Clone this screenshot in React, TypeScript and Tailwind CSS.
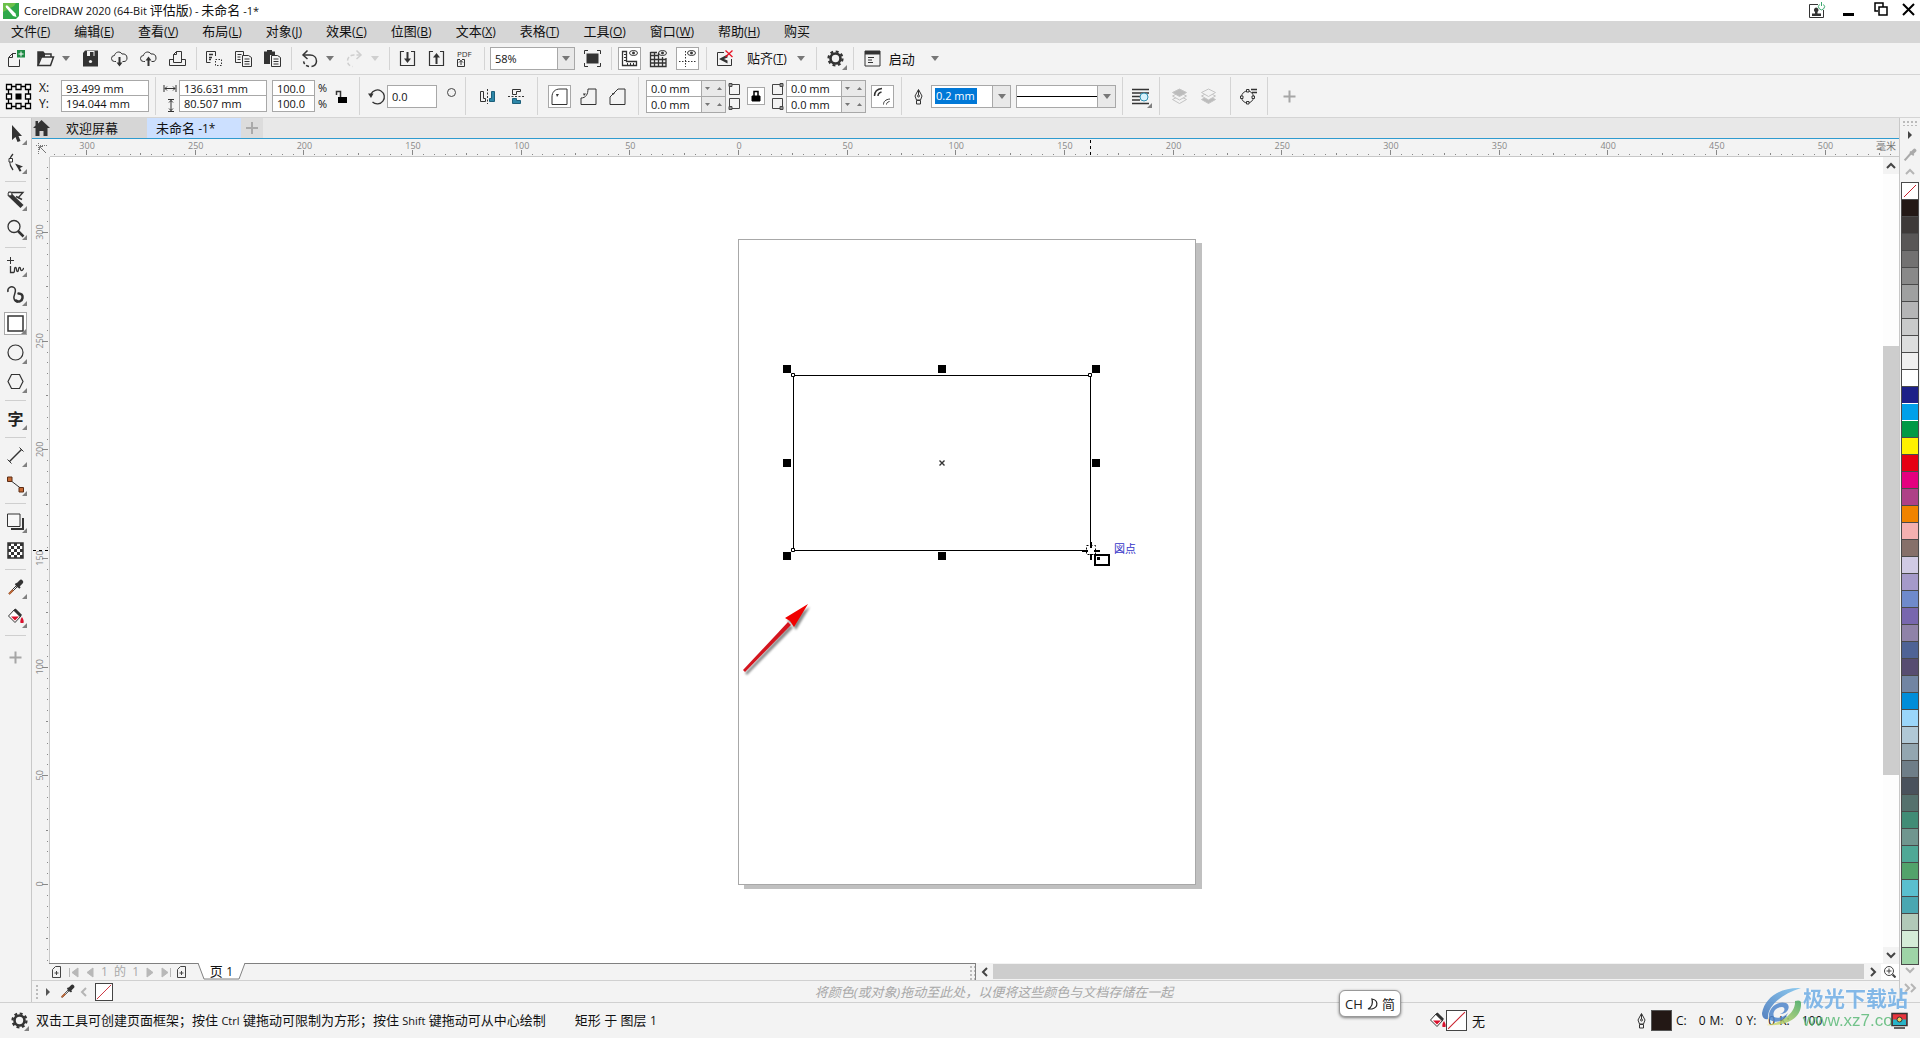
import type { ReactNode } from 'react';

const menus: [string, string][] = [
    ['文件', 'F'],
    ['编辑', 'E'],
    ['查看', 'V'],
    ['布局', 'L'],
    ['对象', 'J'],
    ['效果', 'C'],
    ['位图', 'B'],
    ['文本', 'X'],
    ['表格', 'T'],
    ['工具', 'O'],
    ['窗口', 'W'],
    ['帮助', 'H'],
    ['购买', ''],
];

const swatches = [
    '#231815', '#3e3a39', '#595757', '#727171', '#898989', '#9fa0a0', '#b5b5b6', '#c9caca', '#dcdddd', '#efefef', '#ffffff',
    '#1d2088', '#00a0e9', '#009944', '#fff100', '#e60012', '#e4007f', '#ae4087', '#f08300', '#f4b0b0', '#86706a', '#d0cae4',
    '#a59aca', '#6f8acb', '#7867ae', '#8f82a8', '#4f6395', '#574d71', '#7185a3', '#008dd9', '#9ad6fa', '#b0c8d6', '#93a6b0',
    '#6f7e88', '#4a525c', '#55716d', '#418c76', '#70968f', '#4fa896', '#52a36b', '#5abfce', '#4aa7b1', '#b1c9b8', '#d5ebd7',
    '#9ed4a7',
];

// pixels per millimetre at 58% zoom
const SCALE = 2.173;

/* ---------- icons ---------- */

function Svg({ children, size = 17 }: { children: ReactNode; size?: number }) {
    return (
        <svg width={size} height={size} viewBox={`0 0 ${size} ${size}`} fill="none" stroke="#333" aria-hidden="true" className="shrink-0 overflow-visible">
            {children}
        </svg>
    );
}

const bucket = (
    <>
        <path d="M7.5 1.5 14 8l-6 6.5L1.5 8z" fill="#fff" />
        <path d="M7.5 1.5 14 8" strokeWidth="3" />
        <path d="M4 8.5h8L8 12.5z" fill="#d9102c" stroke="none" />
        <path d="M15 9c1.500 2.500 2 4 1.500 6h-3c-.5-2 0-4 1.500-6z" fill="#d9102c" stroke="none" />
    </>
);

const dropper = (
    <>
        <path d="M10 6 2.5 13.5l-.5 1.5 1.5-.5L11 7" />
        <path d="m2 15 4-4" stroke="#c06a3a" strokeWidth="2" />
        <path d="m8.5 4.5 4.5 4.5" strokeWidth="2" />
        <path d="m11 6 3-3" strokeWidth="4.5" strokeLinecap="round" />
    </>
);

const gear = (
    <>
        <circle cx="8.5" cy="8.5" r="5" strokeWidth="2.6" />
        <circle cx="8.5" cy="8.5" r="7" strokeWidth="2.2" strokeDasharray="2.9 2.6" />
    </>
);

const nib = (
    <>
        <path d="M8.5 1.5 5 8l1.5 4h4L12 8z" />
        <path d="M8.5 2v5M6.5 12.5h4v3.5h-4z" />
        <circle cx="8.5" cy="8" r="1" />
    </>
);

const icons: Record<string, ReactNode> = {
    new: (
        <>
            <path d="M4.5 3.5.5 7.5v9h11v-7M4.5 3.5H8M1 7.5h3.500v-4" />
            <path d="M9 0h8v7.5H9z" fill="#1e8a44" stroke="none" />
            <path d="M13 1.5v5M10.5 4h5" stroke="#fff" />
        </>
    ),
    open: (
        <>
            <path d="M1 15.5V2h5l1.5 2H14v3" strokeWidth="1.5" />
            <path d="M1 2h5l2 2v3H4L1 15z" fill="#333" stroke="none" />
            <path d="M4.500 7h12L13.5 15.5H1z" strokeWidth="1.5" />
        </>
    ),
    save: (
        <>
            <path d="M3 .5h13v16H1V3z" fill="#333" stroke="none" />
            <path d="M5 1h7.5v5H5z" fill="#f3f3f3" stroke="none" />
            <path d="M8 2h3.5v4H8z" fill="#333" stroke="none" />
            <circle cx="8.5" cy="11.5" r="1.6" fill="#f3f3f3" stroke="none" />
        </>
    ),
    cloudDown: (
        <>
            <path d="M5 11.5H3.5a3 3 0 0 1 0-6C4 2 9 .5 11 4c3-.5 5 1 5 4 0 2-1 3.5-3 3.5h-1.5" />
            <path d="M8.5 7v8" strokeWidth="2" />
            <path d="M5.5 12.5 8.5 16.500l3-4z" fill="#333" stroke="none" />
        </>
    ),
    cloudUp: (
        <>
            <path d="M5 11.5H3.5a3 3 0 0 1 0-6C4 2 9 .5 11 4c3-.5 5 1 5 4 0 2-1 3.5-3 3.5h-1.5" />
            <path d="M8.5 9v7" strokeWidth="2" />
            <path d="M5.5 10.5 8.5 6.500l3 4z" fill="#333" stroke="none" />
        </>
    ),
    print: (
        <>
            <path d="M4.5 9.5H.5v6h16v-6h-4" />
            <path d="M4.5 12.5v-8l3-3h5v11zM4.5 4.5h3v-3" />
        </>
    ),
    cut: (
        <>
            <path d="M9.5 6V1.500h-9v11h4" />
            <path d="M3 4.5h4M3 7.5h3M3 9.5h2" strokeWidth="1.5" />
            <path d="M9.5 9.5h6v6h-6z" strokeDasharray="1.5 1.5" />
        </>
    ),
    copy: (
        <>
            <path d="M6 12.5H.5v-11h8V5M2.5 4.5h4M2.5 7h3M2.5 9.5h3" />
            <path d="M7.5 5.5h6l3 2v9h-9zM9.5 9h5M9.5 11.5h5M9.5 14h5" />
        </>
    ),
    paste: (
        <>
            <path d="M0 1.5h3V0h5v1.5h3V5H6v9H0z" fill="#333" stroke="none" />
            <path d="M7.5 5.5h6l3 2v9h-9zM9.5 9h5M9.5 11.5h5M9.5 14h5" />
        </>
    ),
    undo: (
        <>
            <path d="M2.5 5H9c4 0 6.5 2.500 6.500 6 0 3-2 5-5 5.500" strokeWidth="1.5" />
            <path d="M8 16.500C4.500 16 2.500 13.500 2.500 10" strokeWidth="1.500" strokeDasharray="3 2" />
            <path d="M6.5.5 2 5l4.5 4" strokeWidth="1.5" />
        </>
    ),
    redo: (
        <g stroke="#cfcfcf">
            <path d="M14.5 5H8c-4 0-6.500 2.500-6.500 6 0 3 2 5 5 5.500" strokeWidth="1.5" strokeDasharray="4 2" />
            <path d="M10.5.5 15 5l-4.5 4" strokeWidth="1.5" />
        </g>
    ),
    import: (
        <>
            <path d="M5 1.5H1.5v14h14v-14H12" strokeWidth="1.2" />
            <path d="M8.5 2v8" strokeWidth="2" />
            <path d="M5 8.5 8.5 13 12 8.5z" fill="#333" stroke="none" />
        </>
    ),
    export: (
        <>
            <path d="M5 1.5H1.5v14h14v-14H12" strokeWidth="1.2" />
            <path d="M8.5 6v8" strokeWidth="2" />
            <path d="M5 7.5 8.5 3 12 7.5z" fill="#333" stroke="none" />
        </>
    ),
    pdf: (
        <>
            <text x="0" y="7" fontSize="8" fill="#333" stroke="none">
                PDF
            </text>
            <path d="M3 9.5H.5v7h7v-7H5M4 15v-5M2 12.500l2-2 2 2" />
        </>
    ),
    fullscreen: (
        <>
            <path d="M.5 4V.5H4M13 .5h3.5V4M16.5 13v3.5H13M4 16.5H.5V13" />
            <path d="M2.5 3.5h12v10h-12z" fill="#333" stroke="none" />
        </>
    ),
    rulers: (
        <>
            <path d="M1.5 1.5h4v10h10v4h-14z" strokeWidth="1.3" />
            <path d="M3 4.5h2M3 7.5h2M3 10.5h2M6.5 13v2M9.5 13v2M12.5 13v2" />
            <ellipse cx="12.5" cy="3" rx="4" ry="2.5" />
            <circle cx="12.5" cy="3" r="1" fill="#333" />
        </>
    ),
    grid: (
        <>
            <path d="M.5 2v14.5h15.500V8M4.5 2v14M8.5 3v13M12.5 7v9M1 5.5h8M1 9.5h15M1 13h15M.5 2.5H7" strokeWidth="1.3" />
            <ellipse cx="12.5" cy="3" rx="4" ry="2.5" />
            <circle cx="12.5" cy="3" r="1" fill="#333" />
        </>
    ),
    guides: (
        <>
            <path d="M6.5 1v16M0 11.5h17" strokeDasharray="1.5 1.5" />
            <ellipse cx="12.5" cy="3" rx="4" ry="2.5" />
            <circle cx="12.5" cy="3" r="1" fill="#333" />
        </>
    ),
    snapOff: (
        <>
            <path d="M8 2.5H1.5v13h14V9" />
            <path d="M11.5 4.5 3 9l8.5 4.5v-3L8 9l3.5-1.5z" fill="#333" stroke="none" />
            <path d="m9.5.5 7 6.5m0-6.5L9.500 7" stroke="#e81123" strokeWidth="1.3" />
        </>
    ),
    gear,
    launch: (
        <>
            <path d="M1 1h15v15H1zM4 7.5h6M4 10h4M4 12.5h5" />
            <path d="M1 1h15v3.5H1z" fill="#333" stroke="none" />
        </>
    ),
    mirrorH: (
        <>
            <path d="M1.5 3.5v10h5v-3h-2v-7z" />
            <path d="M15.5 3.5v10h-5v-3h2v-7z" fill="#2d87a8" stroke="#1d5f7a" />
            <path d="M8.5 1v15" strokeDasharray="2 1.5" />
        </>
    ),
    mirrorV: (
        <>
            <path d="M4.5 6.5v-5h8v2h-4v3z" />
            <path d="M4.5 10.5v5h8v-3h-4v-2z" fill="#2d87a8" stroke="#1d5f7a" />
            <path d="M0 8.5h17" strokeDasharray="2 1.5" />
        </>
    ),
    round: (
        <>
            <path d="M1 16.5V9C1 4 4 1 9 1h7v15.500z" />
            <path d="M5 6h3L6 9z" fill="#333" stroke="none" />
        </>
    ),
    scallop: (
        <>
            <path d="M1 16.5V10c5 0 7-4 7-9h8v15.500z" />
            <path d="M3 5.5h3L4 8z" fill="#333" stroke="none" />
        </>
    ),
    chamfer: (
        <>
            <path d="M1 16.5V9l8-8h7v15.500z" />
            <path d="M3 5h3L4 7z" fill="#333" stroke="none" />
        </>
    ),
    relative: (
        <>
            <path d="M.5 8C.5 4 3 1 8 .5" strokeWidth="1.5" />
            <path d="M4 8c0-2 1.500-3.500 3.500-4" strokeWidth="1.5" />
            <path d="M9.500 16.500c0-3 2-5 6.500-5.500M12.500 16.500c0-1.500 1-2.500 3-3" />
        </>
    ),
    nib,
    wrap: (
        <>
            <path d="M0 1.5h17M0 5h17M0 8.5h8M0 12h8M0 15.5h17" strokeWidth="1.3" />
            <circle cx="12" cy="9" r="4" fill="#d8f2fc" stroke="#2f8fb0" />
        </>
    ),
    toFront: (
        <g stroke="#c4c4c4">
            <path d="m8.5 8 7 3.500-7 4-7-4z" />
            <path d="m8.5 4.5 7 3.500-7 4-7-4z" fill="#f3f3f3" />
            <path d="m8.5 1 7 3.500-7 4-7-4z" fill="#bcbcbc" />
        </g>
    ),
    toBack: (
        <g stroke="#c4c4c4">
            <path d="m8.5 8 7 3.500-7 4-7-4z" fill="#bcbcbc" />
            <path d="m8.5 4.5 7 3.500-7 4-7-4z" fill="#f3f3f3" />
            <path d="m8.5 1 7 3.500-7 4-7-4z" fill="#f3f3f3" />
        </g>
    ),
    toCurves: (
        <>
            <circle cx="7.5" cy="9" r="6" />
            <path d="M6.500 1.500h2.500v2.500H6.500zM.5 8h2.500v2.500H.5zM6.500 13.500h2.500v2.500H6.500zM12 8h2.500v2.500H12z" fill="#f3f3f3" />
            <path d="M11 1.5h6M12 4.5h5" strokeWidth="1.5" />
        </>
    ),
    plus: <path d="M8.500 2.500v12M2.500 8.500h12" stroke="#a6a6a6" strokeWidth="2" />,
    pick: <path d="M5 0v15l3.500-3 2 5 3-1-2-5H15z" fill="#333" stroke="none" />,
    shape: (
        <>
            <path d="M6 0C2 4 1.5 10 6 16" strokeWidth="1.3" />
            <path d="M2 4.5h3.500V8H2z" fill="#fff" />
            <path d="m8 9.5 8 3-3 1.500 1.500 3-2 .5-1.500-3z" fill="#333" stroke="none" />
        </>
    ),
    crop: (
        <>
            <path d="m2 3 13 12.5" strokeWidth="4.5" />
            <path d="M1 1.5h15L11 7" strokeWidth="1.3" />
            <circle cx="3" cy="3" r="2" fill="#f3f3f3" />
            <path d="m9 5.5 6 3" strokeWidth="1.5" />
        </>
    ),
    zoom: (
        <>
            <circle cx="7" cy="6.5" r="6" strokeWidth="1.3" />
            <path d="m11 11 5.500 5.500" strokeWidth="2.5" />
        </>
    ),
    freehand: (
        <>
            <path d="M3.5 0v7M0 3.5h7" />
            <path d="M3.500 9v6.500h3c2 0 0-5 2-5s0 4 2 4 0-4 2-4 0 3 2 3 1-2 2.500-2" strokeWidth="1.3" />
        </>
    ),
    artistic: (
        <>
            <path d="M1 6C0 2 4-.500 7 1.500c4 3-1 7 0 11 .5 2 2 3.500 4 3.500" strokeWidth="1.5" />
            <path d="M9 14.500c2 2 6 1 6.500-2.500.5-3-1-4.500-4-4.500" strokeWidth="2.500" strokeLinecap="round" />
        </>
    ),
    rect: <path d="M1 1h15v15H1z" strokeWidth="1.5" />,
    ellipse: <circle cx="8.5" cy="8.5" r="7.5" strokeWidth="1.2" />,
    polygon: <path d="M4.500 1.500h8l3.500 7-3.500 7h-8L1 8.500z" strokeWidth="1.2" />,
    dimension: (
        <>
            <path d="M2.500 14.500 14.500 2.500" strokeWidth="1.5" />
            <path d="m.500 12.500 4 4M12.500.500l4 4" />
        </>
    ),
    connector: (
        <>
            <path d="m3 4 11 8.5" />
            <path d="M.5 1h4.500v4.500H.5zM12 11.500h4.500V16H12z" fill="#c66a35" stroke="#5a2c14" />
        </>
    ),
    shadow: (
        <>
            <path d="M4 16h12V5" strokeWidth="2" />
            <path d="M.5 1h12.500v12.500H.5z" fill="#f8f8f8" />
        </>
    ),
    transparency: (
        <>
            <path d="M1 1h15v15H1z" fill="#fff" strokeWidth="1.5" />
            <path d="M1 2.5h15M1 8.5h15M1 14.5h15" strokeWidth="3" strokeDasharray="3 3" />
            <path d="M4 5.5h12M4 11.5h12" strokeWidth="3" strokeDasharray="3 3" />
        </>
    ),
    dropper,
    fill: bucket,
};

function Caret({ light = false }: { light?: boolean }) {
    return (
        <svg width="8" height="5" viewBox="0 0 8 5" aria-hidden="true">
            <path d="M0 0h8L4 5z" fill={light ? '#cfcfcf' : '#777'} />
        </svg>
    );
}

function Flyout() {
    return (
        <svg width="5" height="5" viewBox="0 0 5 5" aria-hidden="true" className="absolute right-0 bottom-0">
            <path d="M5 0v5H0z" fill="#808080" />
        </svg>
    );
}

function Chevron({ dir, light = false }: { dir: 'up' | 'down' | 'left' | 'right'; light?: boolean }) {
    const d = { up: 'M1 7l4-4 4 4', down: 'M1 3l4 4 4-4', left: 'M7 1L3 5l4 4', right: 'M3 1l4 4-4 4' }[dir];
    return (
        <svg width="10" height="10" viewBox="0 0 10 10" fill="none" stroke={light ? '#b5b5b5' : '#444'} strokeWidth="2" aria-hidden="true">
            <path d={d} />
        </svg>
    );
}

/* ---------- controls ---------- */

function Tool({ icon, label, boxed = false, flyout = false }: { icon: string; label: string; boxed?: boolean; flyout?: boolean }) {
    return (
        <button type="button" aria-label={label} className="flex h-[29px] w-[29px] shrink-0 items-center justify-center">
            <span className={`relative flex h-[23px] w-[23px] items-center justify-center ${boxed ? 'border border-[#a8a8a8] bg-white' : ''}`}>
                <Svg>{icons[icon]}</Svg>
                {flyout && <Flyout />}
            </span>
        </button>
    );
}

function CaretButton({ label, light = false }: { label: string; light?: boolean }) {
    return (
        <button type="button" aria-label={label} className="flex h-[23px] w-4 shrink-0 items-center pl-[2px]">
            <Caret light={light} />
        </button>
    );
}

function Sep({ tall = false }: { tall?: boolean }) {
    return (
        <div className="flex w-2 shrink-0 justify-center">
            <div className={`w-px bg-[#d4d4d4] ${tall ? 'h-[38px]' : 'h-[23px]'}`} />
        </div>
    );
}

function Field({ label, value }: { label: string; value: string }) {
    return <input aria-label={label} defaultValue={value} className="h-[15px] w-full min-w-0 bg-white pl-1 text-[11px] leading-[15px] outline-none" />;
}

function Pair({ labels, values, className }: { labels: string[]; values: string[]; className: string }) {
    return (
        <div className={`flex shrink-0 flex-col divide-y divide-[#a8a8a8] border border-[#a8a8a8] ${className}`}>
            {labels.map((label, i) => (
                <Field key={label} label={label} value={values[i]} />
            ))}
        </div>
    );
}

function SpinPair({ labels }: { labels: string[] }) {
    return (
        <div className="flex w-20 shrink-0 flex-col divide-y divide-[#a8a8a8] border border-[#a8a8a8]">
            {labels.map((label) => (
                <div key={label} className="flex">
                    <Field label={label} value="0.0 mm" />
                    <div className="flex w-6 shrink-0 items-center justify-around border-l border-[#a8a8a8] bg-[#e9e9e9]">
                        <button type="button" aria-label={`${label} -`}>
                            <svg width="5" height="3" viewBox="0 0 5 3">
                                <path d="M0 0h5L2.500 3z" fill="#777" />
                            </svg>
                        </button>
                        <button type="button" aria-label={`${label} +`}>
                            <svg width="5" height="3" viewBox="0 0 5 3">
                                <path d="M0 3h5L2.500 0z" fill="#777" />
                            </svg>
                        </button>
                    </div>
                </div>
            ))}
        </div>
    );
}

function CornerMarks({ side }: { side: 'left' | 'right' }) {
    const x = side === 'left' ? 1 : 9;
    return (
        <svg width="13" height="29" viewBox="0 0 13 29" fill="none" stroke="#444" aria-hidden="true" className="shrink-0">
            <path d="M1.5 2.5h10v10h-10zM1.5 16.5h10v10h-10z" />
            <path d={`M${x} 1.5h3v3h-3zM${x} 24.5h3v3h-3z`} fill="#999" />
        </svg>
    );
}

function Grip({ className }: { className: string }) {
    return <div className={`shrink-0 bg-[radial-gradient(#bbb_1px,transparent_1px)] bg-[length:4px_4px] ${className}`} />;
}

/* ---------- top bars ---------- */

function TitleBar() {
    return (
        <header className="flex h-[21px] shrink-0 items-center bg-white pl-[3px]">
            <svg width="16" height="16" viewBox="0 0 16 16" aria-hidden="true">
                <path d="M0 3 3 0h13v13l-3 3H0z" fill="#2fa84a" />
                <path d="M0 0h13l-2 3L0 9z" fill="#6cc04a" />
                <path d="M3 4.500C2 2.500 3.500 2 5 3l7.500 7.500 1 3.500-3.500-1z" fill="#fff" />
            </svg>
            <h1 className="ml-[5px] text-[13px] leading-5 whitespace-pre">
                <span className="text-[11px]">CorelDRAW 2020 (64-Bit </span>评估版<span className="text-[11px]">) - </span>未命名
                <span className="text-[11px]"> -1*</span>
            </h1>
            <div className="ml-auto flex items-center">
                <button type="button" aria-label="帐户" className="flex w-8 justify-center">
                    <Svg>
                        <path d="M10 2.5H1.5v13h14V8" />
                        <path d="M8 5.500a2.500 2.500 0 0 1 1.500 4.500v1.500H13V14H4v-2.500h3V10a2.500 2.500 0 0 1 1-4.500z" fill="#333" stroke="none" />
                        <path d="M11.5 2.5a3 3 0 1 0 4 0M13.5 0v4" stroke="#3aa76d" />
                    </Svg>
                </button>
                <button type="button" aria-label="最小化" className="flex w-8 justify-center">
                    <Svg>
                        <path d="M3 12.5h11" stroke="#000" strokeWidth="3" />
                    </Svg>
                </button>
                <button type="button" aria-label="还原" className="flex w-8 justify-center">
                    <Svg>
                        <path d="M6 9H3V1h8v4M7 5h8v8H7z" stroke="#000" strokeWidth="1.5" />
                    </Svg>
                </button>
                <button type="button" aria-label="关闭" className="flex w-6 justify-center">
                    <Svg>
                        <path d="m3 2 11 11M14 2 3 13" stroke="#000" strokeWidth="2" />
                    </Svg>
                </button>
            </div>
        </header>
    );
}

function MenuBar() {
    return (
        <nav className="flex h-[22px] shrink-0 items-center bg-[#d6d6d6] pb-[2px] text-[13px] leading-5">
            {menus.map(([name, key]) => (
                <button key={name} type="button" className="px-3 whitespace-nowrap first:pl-[11px]">
                    {name}
                    {key && (
                        <span className="text-[12px]">
                            (<u>{key}</u>)
                        </span>
                    )}
                </button>
            ))}
        </nav>
    );
}

function StandardBar() {
    return (
        <div className="flex h-8 shrink-0 items-center border-b border-[#d4d4d4] pl-[2px] text-[13px] leading-5">
            <Tool icon="new" label="新建" />
            <Tool icon="open" label="打开" />
            <CaretButton label="最近的文件" />
            <Tool icon="save" label="保存" />
            <Tool icon="cloudDown" label="从云中打开" />
            <Tool icon="cloudUp" label="保存到云" />
            <Tool icon="print" label="打印" />
            <Sep />
            <Tool icon="cut" label="剪切" />
            <Tool icon="copy" label="复制" />
            <Tool icon="paste" label="粘贴" />
            <Sep />
            <Tool icon="undo" label="撤消" />
            <CaretButton label="撤消列表" />
            <Tool icon="redo" label="重做" />
            <CaretButton label="重做列表" light />
            <Sep />
            <Tool icon="import" label="导入" />
            <Tool icon="export" label="导出" />
            <Tool icon="pdf" label="发布为 PDF" />
            <Sep />
            <div className="relative mr-[3px] ml-[2px] h-[23px] w-[85px] shrink-0">
                <select aria-label="缩放级别" className="h-full w-full appearance-none border border-[#a8a8a8] bg-white pl-1 text-[11px] leading-5 outline-none">
                    <option>58%</option>
                </select>
                <div className="pointer-events-none absolute inset-y-0 right-0 flex w-[18px] items-center justify-center border border-[#a8a8a8] bg-[#e9e9e9]">
                    <Caret />
                </div>
            </div>
            <Tool icon="fullscreen" label="全屏预览" />
            <Sep />
            <Tool icon="rulers" label="显示标尺" boxed />
            <Tool icon="grid" label="显示网格" />
            <Tool icon="guides" label="显示辅助线" boxed />
            <Sep />
            <Tool icon="snapOff" label="关闭贴齐" />
            <button type="button" className="ml-2 whitespace-nowrap">
                贴齐
                <span className="text-[12px]">
                    (<u>T</u>)
                </span>
            </button>
            <div className="w-2" />
            <CaretButton label="贴齐选项" />
            <div className="w-[2px]" />
            <Sep />
            <Tool icon="gear" label="选项" flyout />
            <Sep />
            <Tool icon="launch" label="应用程序启动器" />
            <button type="button" className="mr-[14px] ml-[2px]">
                启动
            </button>
            <CaretButton label="启动列表" />
        </div>
    );
}

function PropertyBar() {
    return (
        <div className="flex h-[43px] shrink-0 items-center border-b border-[#d4d4d4] pl-[6px]">
            <button type="button" aria-label="对象原点">
                <Svg size={25}>
                    <path d="M2.5 2.5h20v20h-20z" stroke="#000" strokeWidth="1.3" />
                    <path
                        d="M.5.5h5v5h-5zM10 .5h5v5h-5zM19.5.5h5v5h-5zM.5 10h5v5h-5zM19.5 10h5v5h-5zM.5 19.5h5v5h-5zM10 19.5h5v5h-5zM19.5 19.5h5v5h-5z"
                        fill="#fff"
                        stroke="#000"
                        strokeWidth="1.3"
                    />
                    <path d="M9.500 9.500h6v6h-6z" fill="#000" stroke="none" />
                </Svg>
            </button>
            <div className="ml-2 flex w-[22px] shrink-0 flex-col text-[12px] leading-4">
                <span>X:</span>
                <span>Y:</span>
            </div>
            <Pair labels={['X', 'Y']} values={['93.499 mm', '194.044 mm']} className="w-[88px]" />
            <div className="w-[2px]" />
            <Sep tall />
            <svg width="14" height="33" viewBox="0 0 14 33" fill="none" stroke="#333" aria-hidden="true" className="mr-[2px] ml-1 shrink-0">
                <path d="M1 5v7M13 5v7M2 8.5h10M4 6.5l-2 2 2 2M10 6.5l2 2-2 2M5 19.5h6M5 31.5h6M8 20v11M6 22.5l2-2 2 2M6 28.5l2 2 2-2" />
            </svg>
            <Pair labels={['宽度', '高度']} values={['136.631 mm', '80.507 mm']} className="w-[88px]" />
            <Pair labels={['水平缩放', '垂直缩放']} values={['100.0', '100.0']} className="ml-[5px] w-[43px]" />
            <div className="ml-[3px] flex w-4 shrink-0 flex-col text-[11px] leading-4">
                <span>%</span>
                <span>%</span>
            </div>
            <button type="button" aria-label="锁定比率" className="mr-1">
                <Svg>
                    <path d="M2.5 7V3.500h4V9" strokeWidth="1.5" />
                    <path d="M4 9h9v6H4z" fill="#000" stroke="none" />
                </Svg>
            </button>
            <Sep tall />
            <div className="ml-[5px]">
                <Svg>
                    <path d="M3 6a7 7 0 1 1 1.500 8" strokeWidth="1.3" />
                    <path d="M0 5.5h5.500L3 10z" fill="#333" stroke="none" />
                </Svg>
            </div>
            <div className="ml-[2px] flex h-[23px] w-[50px] shrink-0 items-center border border-[#a8a8a8] bg-white">
                <Field label="旋转角度" value="0.0" />
            </div>
            <span className="ml-[10px] mb-2 h-[9px] w-[9px] shrink-0 rounded-full border border-[#444]" />
            <div className="w-[5px]" />
            <Sep tall />
            <div className="w-1" />
            <Tool icon="mirrorH" label="水平镜像" />
            <Tool icon="mirrorV" label="垂直镜像" />
            <div className="w-[2px]" />
            <Sep tall />
            <div className="w-1" />
            <Tool icon="round" label="圆角" boxed />
            <Tool icon="scallop" label="扇形角" />
            <Tool icon="chamfer" label="倒棱角" />
            <div className="w-[2px]" />
            <Sep tall />
            <div className="w-1" />
            <SpinPair labels={['左上半径', '左下半径']} />
            <div className="w-[2px]" />
            <CornerMarks side="left" />
            <button type="button" aria-label="同时编辑所有角" className="mx-[6px] flex h-[18px] w-[18px] shrink-0 items-center justify-center border border-[#a8a8a8] bg-white">
                <svg width="10" height="12" viewBox="0 0 10 12" fill="none" stroke="#000">
                    <path d="M3 6V1.5h4V6" strokeWidth="1.5" />
                    <path d="M1 6h8v5H1z" fill="#000" />
                </svg>
            </button>
            <CornerMarks side="right" />
            <div className="w-[2px]" />
            <SpinPair labels={['右上半径', '右下半径']} />
            <div className="w-[2px]" />
            <Tool icon="relative" label="相对角缩放" boxed />
            <Sep tall />
            <div className="w-[2px]" />
            <div className="flex w-[22px] shrink-0 justify-center">
                <Svg>{icons.nib}</Svg>
            </div>
            <div className="ml-[2px] flex h-[23px] w-20 shrink-0 items-center border border-[#a8a8a8] bg-white pl-[3px]">
                <input aria-label="轮廓宽度" defaultValue="0.2 mm" className="h-4 w-[42px] bg-[#0078d7] px-[1px] text-[11px] leading-4 text-white outline-none" />
                <button type="button" aria-label="轮廓宽度列表" className="ml-auto flex h-full w-[18px] items-center justify-center border-l border-[#a8a8a8] bg-[#e9e9e9]">
                    <Caret />
                </button>
            </div>
            <div className="relative ml-[5px] h-[23px] w-[100px] shrink-0">
                <select aria-label="线条样式" className="h-full w-full appearance-none border border-[#a8a8a8] bg-white outline-none" />
                <div className="pointer-events-none absolute top-[11px] right-[18px] left-px h-px bg-black" />
                <div className="pointer-events-none absolute inset-y-0 right-0 flex w-[19px] items-center justify-center border border-[#a8a8a8] bg-[#e9e9e9]">
                    <Caret />
                </div>
            </div>
            <div className="w-[2px]" />
            <Sep tall />
            <Tool icon="wrap" label="文本换行" flyout />
            <Sep tall />
            <div className="w-[2px]" />
            <Tool icon="toFront" label="到图层前面" />
            <Tool icon="toBack" label="到图层后面" />
            <div className="w-[3px]" />
            <Sep tall />
            <Tool icon="toCurves" label="转换为曲线" />
            <Sep tall />
            <div className="w-1" />
            <Tool icon="plus" label="快速自定义" />
        </div>
    );
}

/* ---------- left toolbox ---------- */

const toolbox: [string, string, boolean][][] = [
    [['pick', '选择工具', true], ['shape', '形状工具', true]],
    [['crop', '裁剪工具', true], ['zoom', '缩放工具', true]],
    [['freehand', '手绘工具', true], ['artistic', '艺术笔工具', true], ['rect', '矩形工具', true], ['ellipse', '椭圆形工具', true], ['polygon', '多边形工具', true]],
    [['text', '文本工具', true]],
    [['dimension', '平行度量工具', true], ['connector', '连接器工具', true]],
    [['shadow', '阴影工具', true], ['transparency', '透明度工具', false]],
    [['dropper', '颜色滴管工具', true], ['fill', '交互式填充工具', true]],
];

function Toolbox() {
    return (
        <aside className="flex w-8 shrink-0 flex-col border-r border-[#c8c8c8] pt-px">
            {toolbox.map((group) => (
                <div key={group[0][0]} className="flex flex-col">
                    {group.map(([icon, label, flyout]) => (
                        <button key={icon} type="button" aria-label={label} className="flex h-[29px] w-full items-center justify-center">
                            <span className={`relative flex h-[23px] w-[23px] items-center justify-center ${icon === 'rect' ? 'border border-[#a8a8a8] bg-white' : ''}`}>
                                {icon === 'text' ? <b className="text-[16px] leading-[22px] text-[#222]">字</b> : <Svg>{icons[icon]}</Svg>}
                                {flyout && <Flyout />}
                            </span>
                        </button>
                    ))}
                    <div className="mx-[5px] my-[3px] h-[2px] border-b border-[#cfcfcf]" />
                </div>
            ))}
            <button type="button" aria-label="快速自定义工具箱" className="mt-1 flex h-[29px] w-full items-center justify-center">
                <Svg>{icons.plus}</Svg>
            </button>
        </aside>
    );
}

/* ---------- document area ---------- */

function DocTabs() {
    return (
        <div className="flex h-[21px] shrink-0 border-b border-[#2f9bcf] bg-[#e8e8e8] text-[13px] leading-[19px]">
            <button type="button" className="flex w-[115px] items-center bg-[#d6d6d6] pl-px">
                <svg width="17" height="16" viewBox="0 0 17 16" aria-hidden="true">
                    <path d="M8.5 0 17 8h-2.500v8h-4v-5h-4v5h-4V8H0l2.500-2.500V1h2.500v2.500z" fill="#333" />
                </svg>
                <span className="ml-4">欢迎屏幕</span>
            </button>
            <button type="button" className="w-[94px] bg-[#cce0ff] pl-[9px] text-left whitespace-pre">
                未命名<span className="text-[12px]"> -1*</span>
            </button>
            <button type="button" aria-label="新建文档" className="flex w-[22px] items-center justify-center bg-[#dcdcdc]">
                <svg width="12" height="12" viewBox="0 0 12 12" stroke="#aaa" strokeWidth="2">
                    <path d="M6 0v12M0 6h12" />
                </svg>
            </button>
        </div>
    );
}

function TopRuler() {
    const ticks = Array.from({ length: 170 }, (_, i) => (i - 63) * 5);
    return (
        <div className="relative h-[18px] min-w-0 flex-1 border-b border-[#c8c8c8]">
            <svg width="100%" height="17" stroke="#888" className="block">
                {ticks.map((mm) => {
                    const x = Math.round(688 + mm * SCALE) + 0.5;
                    const len = mm % 50 === 0 ? 5 : mm % 25 === 0 ? 2 : 1;
                    return <path key={mm} d={`M${x} ${16 - len}v${len}`} />;
                })}
                {ticks
                    .filter((mm) => mm % 50 === 0 && mm < 550)
                    .map((mm) => (
                        <text key={mm} x={689 + mm * SCALE} y="10" fontSize="9" textAnchor="middle" fill="#888" stroke="none">
                            {Math.abs(mm)}
                        </text>
                    ))}
                <path d="M1040.5 1v16" stroke="#000" strokeDasharray="3 3" />
            </svg>
            <span className="absolute top-px right-[3px] text-[10px] leading-3 text-[#777]">毫米</span>
        </div>
    );
}

function LeftRuler() {
    const ticks = Array.from({ length: 80 }, (_, i) => (i - 8) * 5);
    return (
        <div className="relative w-[18px] shrink-0 overflow-hidden border-r border-[#c8c8c8]">
            <svg width="17" height="100%" stroke="#888" className="absolute inset-0">
                {ticks.map((mm) => {
                    const y = Math.round(727 - mm * SCALE) + 0.5;
                    const len = mm % 50 === 0 ? 6 : mm % 25 === 0 ? 2 : 1;
                    return <path key={mm} d={`M${16 - len} ${y}h${len}`} />;
                })}
                {ticks
                    .filter((mm) => mm % 50 === 0 && mm < 350)
                    .map((mm) => (
                        <text key={mm} transform={`translate(11 ${727 - mm * SCALE}) rotate(-90)`} fontSize="9" textAnchor="middle" fill="#888" stroke="none">
                            {Math.abs(mm)}
                        </text>
                    ))}
                <path d="M1 393.5h16" stroke="#000" strokeDasharray="3 3" />
            </svg>
        </div>
    );
}

const handles = [
    [49, 130],
    [204, 130],
    [358, 130],
    [49, 224],
    [358, 224],
    [49, 317],
    [204, 317],
];

function Canvas() {
    return (
        <main className="relative min-w-0 flex-1 overflow-hidden bg-white">
            <div className="absolute top-[82px] left-[688px] h-[646px] w-[458px] border border-[#a8a8a8] bg-white shadow-[6px_4px_0_#c0c0c0]">
                <svg width="458" height="646" viewBox="1 1 458 646" fill="none" stroke="#000" className="absolute top-0 left-0 overflow-visible">
                    <path d="M55.5 136.5h297v175h-297z" />
                    {handles.map(([x, y]) => (
                        <path key={`${x}-${y}`} d={`M${x - 4} ${y - 4}h8v8h-8z`} fill="#000" stroke="none" />
                    ))}
                    <path d="M53.500 134.500h3v3h-3zM350.500 134.500h3v3h-3zM53.500 309.500h3v3h-3z" fill="#fff" />
                    <path d="m201.5 221.5 5 5m0-5-5 5" stroke="#333" strokeWidth="1.4" />
                    <path d="M348.500 306.500h9v9h-9z" fill="#fff" strokeDasharray="2 2" />
                    <path d="M353 303v6M353 315v6M344 312h6M356 312h6" strokeWidth="2" />
                    <path d="M357 316h14v10h-14z" fill="#fff" strokeWidth="2" />
                    <path d="M359 318h3v3h-3z" fill="#000" stroke="none" />
                    <g className="[filter:drop-shadow(2px_3px_1px_rgb(0_0_0/0.45))]" stroke="none">
                        <path d="M5 431 50 383 53 386 7 433z" fill="#d4141e" />
                        <path d="M70 365 47 379 52 382 56 388z" fill="#f00000" />
                    </g>
                </svg>
                <span className="absolute top-[302px] left-[375px] text-[11px] leading-[14px] whitespace-nowrap text-[#3535c8]">図点</span>
            </div>
        </main>
    );
}

function VerticalScroll() {
    return (
        <div className="flex w-4 shrink-0 flex-col bg-[#fdfdfd]">
            <button type="button" aria-label="向上滚动" className="flex h-[17px] items-center justify-center bg-[#f3f3f3]">
                <Chevron dir="up" />
            </button>
            <div className="grow-[172]" />
            <div className="grow-[430] bg-[#cdcdcd]" />
            <div className="grow-[172]" />
            <button type="button" aria-label="向下滚动" className="flex h-4 items-center justify-center bg-[#f3f3f3]">
                <Chevron dir="down" />
            </button>
        </div>
    );
}

const navShapes: [string, string][] = [
    ['第一页', 'M1.5 1v9M10 1v9L4 5.500z'],
    ['上一页', 'M8 1v9L2 5.500z'],
];

const navShapesEnd: [string, string][] = [
    ['下一页', 'M3 1v9l6-4.500z'],
    ['最后一页', 'M9.5 1v9M1 1v9l6-4.500z'],
];

function NavButton({ label, d }: { label: string; d: string }) {
    return (
        <button type="button" aria-label={label} className="flex w-[17px] justify-center">
            <svg width="11" height="11" viewBox="0 0 11 11" fill="#b8b8b8" stroke="#b8b8b8">
                <path d={d} />
            </svg>
        </button>
    );
}

function AddPage({ label }: { label: string }) {
    return (
        <button type="button" aria-label={label} className="flex w-[13px] justify-center">
            <svg width="9" height="12" viewBox="0 0 9 12" fill="none" stroke="#444">
                <path d="M3.5.5h5v11h-8v-8zM2.5 7h4M4.5 5v4" />
            </svg>
        </button>
    );
}

function PageBar() {
    return (
        <div className="flex h-[18px] shrink-0 border-b border-[#d0d0d0]">
            <div className="ml-[17px] flex w-[927px] shrink-0 border-t border-r border-[#808080] pl-px">
                <div className="flex items-center text-[12px] leading-4 text-[#a8a8a8]">
                    <AddPage label="在前面添加页" />
                    <div className="w-[2px]" />
                    {navShapes.map(([label, d]) => (
                        <NavButton key={label} label={label} d={d} />
                    ))}
                    <span className="w-[42px] text-center whitespace-pre">1  的  1</span>
                    {navShapesEnd.map(([label, d]) => (
                        <NavButton key={label} label={label} d={d} />
                    ))}
                    <AddPage label="在后面添加页" />
                </div>
                <button type="button" className="relative -mt-px ml-[10px] h-[17px] w-[47px] text-[13px] leading-[17px]">
                    <svg width="47" height="17" viewBox="0 0 47 17" fill="#fff" stroke="#808080" className="absolute inset-0" aria-hidden="true">
                        <path d="M0 0 6 16h35L47 0" />
                    </svg>
                    <span className="relative">
                        页 <span className="text-[12px]">1</span>
                    </span>
                </button>
                <Grip className="mt-px ml-auto h-4 w-[6px]" />
            </div>
            <div className="flex min-w-0 flex-1 pt-px">
                <button type="button" aria-label="向左滚动" className="flex w-[17px] items-center justify-center">
                    <Chevron dir="left" />
                </button>
                <div className="mb-px flex-1 bg-[#cdcdcd]" />
                <button type="button" aria-label="向右滚动" className="flex w-[17px] items-center justify-center">
                    <Chevron dir="right" />
                </button>
                <button type="button" aria-label="导航器" className="flex w-[18px] items-center justify-center bg-white">
                    <svg width="12" height="12" viewBox="0 0 12 12" fill="none" stroke="#444">
                        <circle cx="5" cy="5" r="4.5" />
                        <path d="M5 2.5v5M2.5 5h5" />
                        <path d="m8.5 8.5 3 3" strokeWidth="2" />
                    </svg>
                </button>
            </div>
        </div>
    );
}

function NoColor({ className }: { className: string }) {
    return (
        <svg viewBox="0 0 18 18" stroke="#c8202c" className={`shrink-0 border border-[#444] bg-white ${className}`} aria-hidden="true">
            <path d="M1 17 17 1" />
        </svg>
    );
}

function DocPalette() {
    return (
        <div className="flex h-[21px] shrink-0 items-center pl-[3px]">
            <Grip className="h-4 w-[5px]" />
            <button type="button" aria-label="文档调色板菜单" className="mr-2 ml-[6px]">
                <svg width="6" height="8" viewBox="0 0 6 8">
                    <path d="M0 0v8l4-4z" fill="#555" />
                </svg>
            </button>
            <button type="button" aria-label="文档调色板滴管">
                <svg width="15" height="15" viewBox="0 0 17 17" fill="none" stroke="#333">
                    {dropper}
                </svg>
            </button>
            <div className="mr-[6px] ml-1">
                <Chevron dir="left" light />
            </div>
            <NoColor className="h-[18px] w-[18px]" />
            <p className="flex-1 pr-6 text-center text-[13px] leading-5 text-[#a8a8a8] italic">将颜色(或对象)拖动至此处，以便将这些颜色与文档存储在一起</p>
        </div>
    );
}

function ColorStrip() {
    return (
        <aside className="flex w-[21px] shrink-0 flex-col items-center border-l border-[#c8c8c8]">
            <Grip className="mt-[2px] h-[6px] w-4" />
            <svg width="5" height="8" viewBox="0 0 5 8" aria-hidden="true" className="mt-[5px]">
                <path d="M0 0v8l4-4z" fill="#444" />
            </svg>
            <svg width="14" height="14" viewBox="0 0 17 17" fill="none" stroke="#aaa" aria-hidden="true" className="mt-[9px]">
                <path d="M10 6 2 15" strokeWidth="2.5" />
                <path d="m8.5 4.5 4.5 4.5" strokeWidth="2" />
                <path d="m11 6 3-3" strokeWidth="4.5" strokeLinecap="round" />
            </svg>
            <div className="my-[5px]">
                <Chevron dir="up" light />
            </div>
            <div className="flex w-[18px] flex-col border-x border-t border-[#4a4a4a]">
                <button type="button" aria-label="无填充" className="h-[17px] border-b border-[#4a4a4a] bg-white">
                    <svg width="16" height="16" viewBox="0 0 16 16" stroke="#c8202c">
                        <path d="M2 14 14 2" />
                    </svg>
                </button>
                {swatches.map((color, i) => (
                    <button
                        key={color}
                        type="button"
                        aria-label={color}
                        className={`h-[17px] border-b ${i === 12 || i === 11 ? 'border-white' : 'border-[#4a4a4a]'}`}
                        style={{ backgroundColor: color }}
                    />
                ))}
            </div>
            <Chevron dir="down" light />
            <div className="mt-2 flex -space-x-1">
                <Chevron dir="right" light />
                <Chevron dir="right" light />
            </div>
        </aside>
    );
}

/* ---------- status bar ---------- */

function StatusBar() {
    return (
        <footer className="flex h-9 shrink-0 items-center border-t border-[#d0d0d0] pl-[9px] text-[13px] leading-5">
            <span className="relative flex h-5 w-5 items-center justify-center">
                <Svg>{gear}</Svg>
                <Flyout />
            </span>
            <p className="ml-[7px] whitespace-nowrap">
                双击工具可创建页面框架；按住 <span className="text-[11px]">Ctrl</span> 键拖动可限制为方形；按住 <span className="text-[11px]">Shift</span> 键拖动可从中心绘制
            </p>
            <p className="ml-[29px] whitespace-nowrap">
                矩形 于 图层 <span className="text-[12px]">1</span>
            </p>
            <div className="ml-auto flex w-[204px] shrink-0 items-center">
                <Svg>{bucket}</Svg>
                <NoColor className="h-[21px] w-[21px]" />
                <span className="ml-[5px]">无</span>
            </div>
            <div className="flex w-[260px] shrink-0 items-center">
                <Svg>{nib}</Svg>
                <span className="ml-px h-[21px] w-[21px] border border-[#555] bg-[#231815]" />
                <div className="ml-1 flex gap-1 text-[12px]">
                    {[['C:', '0'], ['M:', '0'], ['Y:', '0'], ['K:', '100']].map(([name, value]) => (
                        <span key={name} className="flex gap-3">
                            <span>{name}</span>
                            <span>{value}</span>
                        </span>
                    ))}
                </div>
            </div>
            <div className="relative z-20 mr-3 ml-[-2px]">
                <Svg>
                    <path d="M1 1.500h15v12H1z" fill="#e8343c" strokeWidth="1.5" />
                    <path d="M2 7.500h13V13H2z" fill="#28b4c8" stroke="none" />
                    <circle cx="8.5" cy="7.5" r="2.5" fill="#f0d060" />
                    <path d="M3 16h11" strokeWidth="1.5" />
                </Svg>
            </div>
        </footer>
    );
}

function ImeBadge() {
    return (
        <div className="absolute right-[519px] bottom-[21px] flex h-[27px] w-[62px] items-center justify-center gap-1 rounded-md border border-[#999] bg-white text-[13px] leading-5 text-[#222] shadow-[0_1px_3px_rgb(0_0_0/0.5)]">
            <span>CH</span>
            <svg width="11" height="12" viewBox="0 0 11 12" fill="none" stroke="#222" strokeWidth="1.2" aria-hidden="true">
                <path d="M5 1c6 1 7 8 0 10H1c4-2 5-6 4-10z" />
            </svg>
            <span>简</span>
        </div>
    );
}

function Watermark() {
    return (
        <div className="pointer-events-none absolute right-3 bottom-2 z-10 flex items-center opacity-85">
            <svg width="42" height="40" viewBox="0 0 42 40" aria-hidden="true">
                <defs>
                    <linearGradient id="wave" x1="0" y1="1" x2="1" y2="0">
                        <stop offset="0" stopColor="#3c6fb8" />
                        <stop offset="1" stopColor="#7cc4f0" />
                    </linearGradient>
                    <linearGradient id="leaf" x1="0" y1="1" x2="1" y2="0">
                        <stop offset="0" stopColor="#e8e070" />
                        <stop offset="1" stopColor="#3fa860" />
                    </linearGradient>
                </defs>
                <path d="M40 1C20 0 4 10 1 26c0 4 2 7 6 6C6 20 18 8 40 1z" fill="url(#wave)" />
                <path d="M5 38c18 2 36-6 35-22 0-3-3-3-6-2 1 11-12 22-29 24z" fill="url(#leaf)" />
                <path d="M8 32c-2-10 8-19 17-16 6 3 1 12-6 11 5-1 6-7 2-7-6 0-10 5-8 10 4 2 10 0 14-4-3 7-12 12-19 6z" fill="#4f86cc" />
            </svg>
            <div className="flex flex-col">
                <span className="text-[21px] leading-[28px] font-bold text-[#70aee6] [text-shadow:0_0_2px_#fff]">极光下载站</span>
                <span className="font-['Liberation_Sans'] text-[17px] leading-[18px] text-[#5cba78]">www.xz7.com</span>
            </div>
        </div>
    );
}

export default function App() {
    return (
        <div className="relative flex h-screen w-full flex-col overflow-hidden bg-[#f3f3f3] font-['Open_Sans','Noto_Sans_CJK_SC',sans-serif] text-[#111]">
            <TitleBar />
            <MenuBar />
            <StandardBar />
            <PropertyBar />
            <div className="flex min-h-0 flex-1">
                <Toolbox />
                <div className="flex min-w-0 flex-1 flex-col">
                    <DocTabs />
                    <div className="flex shrink-0">
                        <div className="flex h-[18px] w-[18px] items-center justify-center">
                            <svg width="11" height="11" viewBox="0 0 11 11" fill="none" stroke="#777" aria-hidden="true">
                                <path d="M0 2.5h11M2.5 0v11" strokeDasharray="1 1" />
                                <path d="m4 4 6 6M3.5 7V3.500H7" />
                            </svg>
                        </div>
                        <TopRuler />
                    </div>
                    <div className="flex min-h-0 flex-1">
                        <LeftRuler />
                        <Canvas />
                        <VerticalScroll />
                    </div>
                    <PageBar />
                    <DocPalette />
                </div>
                <ColorStrip />
            </div>
            <StatusBar />
            <ImeBadge />
            <Watermark />
        </div>
    );
}
